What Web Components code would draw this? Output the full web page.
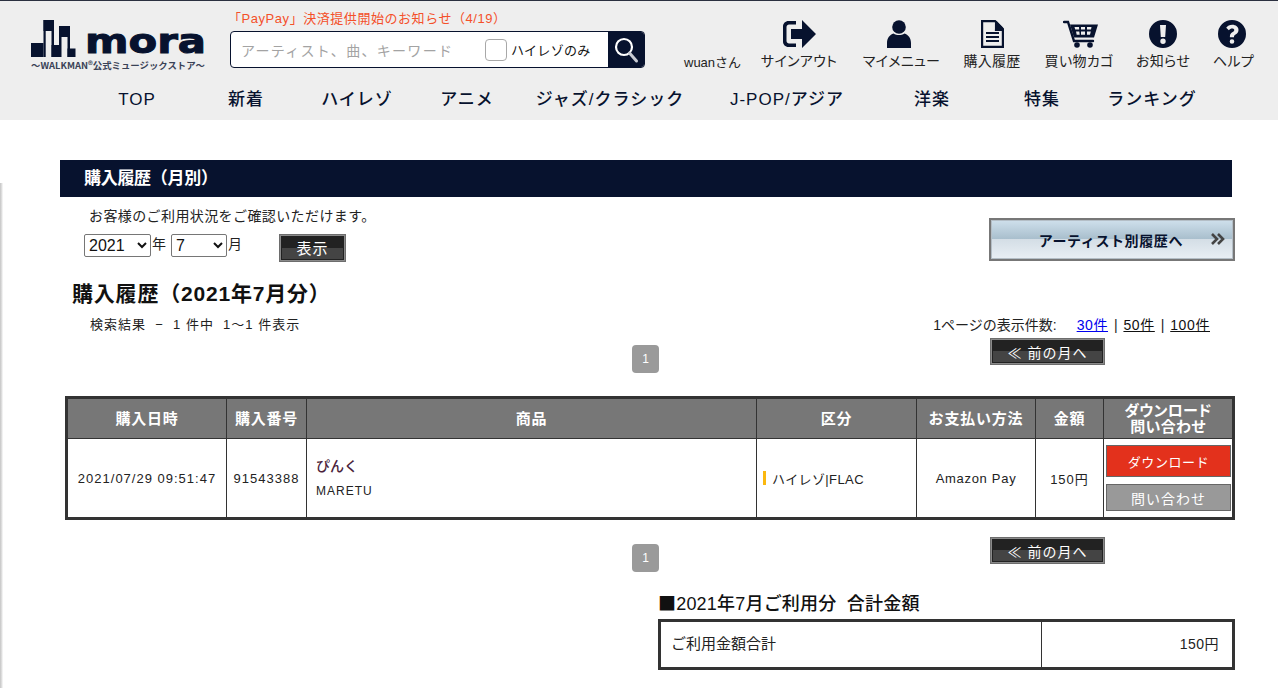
<!DOCTYPE html>
<html lang="ja">
<head>
<meta charset="utf-8">
<title>購入履歴</title>
<style>
  html, body { margin: 0; padding: 0; background: #fff; }
  body {
    font-family: "Liberation Sans", "Noto Sans CJK JP", sans-serif;
    font-size: 13px;
    color: #222;
    overflow: hidden;
    height: 688px;
  }
  .edge {
    position: absolute; left: 0; top: 183px; bottom: 0; width: 3px;
    background: linear-gradient(to right, #c4c4c4, #e6e6e6 70%, #fff);
  }
</style>
</head>
<body>
<div class="edge"></div>

<mora-header>
  <user-link label="サインアウト" style="width:76px">
    <svg width="34" height="28" viewBox="0 0 34 28"><path fill="#07122e" d="M14 1H6.500C3.400 1 1 3.400 1 6.500v15C1 24.600 3.400 27 6.500 27H14v-3.500H7c-1.200 0-2.500-1.200-2.500-2.500V7c0-1.300 1.300-2.500 2.500-2.500h7z"/><path fill="#07122e" d="M9 9h11V0l14 14-14 14v-9H9z"/></svg>
  </user-link>
  <user-link label="マイメニュー" style="width:77px;margin-left:26px" shift="-3">
    <svg width="24" height="28" viewBox="0 0 24 28"><circle cx="12" cy="7" r="6.800" fill="#07122e"/><path fill="#07122e" d="M0 28v-5c0-5 3-8.500 6.500-9.500 3.300 2 7.700 2 11 0 3.500 1 6.500 4.500 6.500 9.500v5z"/></svg>
  </user-link>
  <user-link label="購入履歴" style="width:60px;margin-left:22px">
    <svg width="23" height="28" viewBox="0 0 23 28"><path fill="none" stroke="#07122e" stroke-width="2.200" d="M1.100 1.100h13l7.800 7.800v18h-20.800z"/><path fill="#07122e" d="M14 1.100h1.500l6.400 6.400v3.500h-8z"/><path stroke="#07122e" stroke-width="2" d="M5 13h13M5 17h13M5 21h13"/></svg>
  </user-link>
  <user-link label="買い物カゴ" style="width:66px;margin-left:24px" shift="2">
    <svg width="36" height="28" viewBox="0 0 36 28"><path fill="none" stroke="#07122e" stroke-width="2.400" stroke-linecap="round" d="M1 2h4l6 19h19"/><path fill="#07122e" fill-rule="evenodd" d="M7 4.500h28l-4 13H11zM11.500 7l.7 2.500h4L16 7zM18 7v2.500h4V7zM24 7v2.500h4l.5-2.500zM13 11.500l.7 3.200h3L16.300 11.500zM18 11.500v3.200h4v-3.200zM24 11.500v3.200h3l.8-3.200z"/><circle cx="14" cy="25" r="2.800" fill="#07122e"/><circle cx="27" cy="25" r="2.800" fill="#07122e"/></svg>
  </user-link>
  <user-link label="お知らせ" style="width:56px;margin-left:23px">
    <svg width="28" height="28" viewBox="0 0 28 28"><path fill="#07122e" fill-rule="evenodd" d="M14 0a14 14 0 1 0 0 28 14 14 0 0 0 0-28zM11 5h6l-.8 12h-4.400zM14 18.500a2.700 2.700 0 1 1 0 5.400 2.700 2.700 0 0 1 0-5.400z"/></svg>
  </user-link>
  <user-link label="ヘルプ" style="width:41px;margin-left:22px" shift="-2">
    <svg width="28" height="28" viewBox="0 0 28 28"><path fill="#07122e" fill-rule="evenodd" d="M14 0a14 14 0 1 0 0 28 14 14 0 0 0 0-28zM14.200 4.800c3.700 0 6.300 2.100 6.300 5.200 0 2.400-1.300 3.500-2.900 4.500-1.100.7-1.600 1.200-1.600 2.300v.4h-4.100v-.8c0-2 .8-3.100 2.400-4.100 1.300-.8 2-1.300 2-2.200 0-1-.9-1.600-2.100-1.600-1.300 0-2.400.6-3.300 1.700L8.200 7.700c1.400-1.800 3.400-2.900 6-2.900zM14 19.200a2.300 2.300 0 1 1 0 4.600 2.300 2.300 0 0 1 0-4.600z"/></svg>
  </user-link>
</mora-header>

<mora-main></mora-main>

<template id="header-tpl">
  <style>
    :host {
      display: block; height: 119px; background: #eee;
      border-top: 1px solid #2b3040;
      color: #07122e;
    }
    .top { display: flex; height: 81px; }
    .logo { width: 175px; margin: 19px 0 0 31px; flex: none; }
    .search { width: 415px; margin-left: 24px; flex: none; }
    .notice { color: #f4502a; font-size: 13px; line-height: 18px; margin: 9px 0 0 -2px; letter-spacing: .55px; white-space: nowrap; }
    .box {
      display: flex; align-items: center; height: 35px; margin-top: 3px;
      border: 1px solid #07122e; border-radius: 4px; background: #fff; overflow: hidden;
    }
    .ph { color: #a3a3a3; font-size: 14px; letter-spacing: 1.3px; padding-left: 10px; width: 244px; white-space: nowrap; }
    .cb { width: 20px; height: 20px; border: 1px solid #a8a8a8; border-radius: 4px; background: #fff; flex: none; }
    .hr { font-size: 13px; color: #111; margin-left: 4px; letter-spacing: .3px; white-space: nowrap; }
    .go { margin-left: auto; width: 36px; height: 100%; background: #07122e; display: flex; align-items: center; justify-content: center; }
    .user { font-size: 13px; color: #222; margin: 51px 0 0 39px; width: 77px; flex: none; white-space: nowrap; }
    .links { display: flex; align-items: flex-start; margin-top: 19px; }
    nav { display: grid; grid-template-columns: 110px 108px 114px 106px 180px 174px 116px 104px 116px; margin-left: 82px; }
    nav a {
      text-align: center; font-size: 17px; line-height: 36px; font-weight: 500;
      letter-spacing: 1px; color: #07122e; white-space: nowrap;
    }
  </style>
  <div class="top">
    <svg class="logo" width="175" height="52" viewBox="0 0 175 52">
      <g fill="#07122e">
        <rect x="0" y="23" width="12.500" height="14"/>
        <rect x="12.500" y="0" width="10.500" height="11"/>
        <rect x="12.500" y="0" width="2.200" height="37"/>
        <rect x="20.500" y="0" width="2.500" height="37"/>
        <rect x="20.500" y="25" width="9" height="12"/>
        <rect x="28" y="6" width="11" height="11"/>
        <rect x="28" y="6" width="2.500" height="31"/>
        <rect x="36.500" y="6" width="2.500" height="31"/>
        <rect x="36.500" y="28.500" width="8" height="8.500"/>
      </g>
      <text x="54" y="33" font-family="'DejaVu Sans',sans-serif" font-weight="700" font-size="34" fill="#07122e" stroke="#07122e" stroke-width="1" textLength="121" lengthAdjust="spacingAndGlyphs">mora</text>
      <text x="0" y="49" font-family="'Noto Sans CJK JP',sans-serif" font-weight="700" font-size="9" fill="#3a4256" textLength="174" lengthAdjust="spacingAndGlyphs">〜WALKMAN®公式ミュージックストア〜</text>
    </svg>
    <div class="search">
      <div class="notice">「PayPay」決済提供開始のお知らせ（4/19）</div>
      <div class="box">
        <span class="ph">アーティスト、曲、キーワード</span>
        <span class="cb"></span>
        <span class="hr">ハイレゾのみ</span>
        <span class="go">
          <svg width="26" height="28" viewBox="0 0 26 28"><circle cx="11" cy="11" r="8" fill="none" stroke="#fff" stroke-width="2.200"/><path d="M16.500 17l7 8" stroke="#c9ccd4" stroke-width="3" stroke-linecap="round"/></svg>
        </span>
      </div>
    </div>
    <div class="user">wuanさん</div>
    <div class="links"><slot></slot></div>
  </div>
  <nav>
    <a>TOP</a><a>新着</a><a>ハイレゾ</a><a>アニメ</a><a>ジャズ/クラシック</a><a>J-POP/アジア</a><a>洋楽</a><a>特集</a><a>ランキング</a>
  </nav>
</template>

<template id="user-link-tpl">
  <style>
    :host { display: flex; flex-direction: column; align-items: center; flex: none; color: #222; }
    .ico { height: 28px; display: flex; justify-content: center; }
    .lbl { font-size: 14px; line-height: 18px; margin-top: 4px; white-space: nowrap; font-feature-settings: "palt"; letter-spacing: .3px; }
  </style>
  <div class="ico"><slot></slot></div>
  <div class="lbl"></div>
</template>

<template id="dark-button-tpl">
  <style>
    :host {
      display: inline-flex; align-items: center; justify-content: center; box-sizing: border-box;
      border: 2px solid #8a8a8a; outline: 1px solid #6d6d6d; outline-offset: -1px;
      color: #fff; font-size: 14px; letter-spacing: 1px; white-space: nowrap;
      background: linear-gradient(to bottom, #222 0 50%, #444 50% 100%);
      box-shadow: inset 0 0 0 1px #222;
    }
  </style>
  <slot></slot>
</template>

<template id="pager-chip-tpl">
  <style>
    :host {
      display: flex; align-items: center; justify-content: center;
      width: 27px; height: 28px; border-radius: 4px; background: #9a9a9a;
      color: #fff; font-size: 12px; flex: none;
    }
  </style>
  <slot></slot>
</template>

<template id="page-row-tpl">
  <style>
    :host { display: flex; align-items: flex-start; height: 35px; }
    pager-chip { margin: 7px 0 0 572px; }
    dark-button { width: 115px; height: 27px; margin-left: 331px; }
  </style>
  <pager-chip>1</pager-chip>
  <dark-button>≪ 前の月へ</dark-button>
</template>

<template id="history-table-tpl">
  <style>
    :host { display: block; width: 1170px; margin-left: 5px; }
    table {
      width: 100%; box-sizing: border-box; height: 124px; table-layout: fixed; border-collapse: collapse;
      border: 3px solid #333; letter-spacing: 1px; font-size: 13px; color: #222;
    }
    col.a { width: 160px; } col.b { width: 80px; } col.c { width: 450px; } col.d { width: 160px; } col.e { width: 119px; } col.f { width: 68px; }
    th {
      height: 39px; padding: 0; background: #777; color: #fff; font-size: 15px; font-weight: 700;
      line-height: 16px; border: 1px solid #333; border-top: 0; letter-spacing: .8px; white-space: nowrap;
    }
    th.kana { font-feature-settings: "palt"; letter-spacing: .3px; }
    td { padding: 0; border: 1px solid #333; text-align: center; }
    td.item { text-align: left; padding-left: 9px; }
    .title { font-size: 14px; color: #4c1f3c; font-weight: 500; line-height: 20px; margin-top: -1px; letter-spacing: 0; }
    .artist { font-size: 12px; line-height: 18px; margin-top: 6px; }
    td.kind { text-align: left; padding-left: 6px; }
    .kind-wrap { display: flex; align-items: center; gap: 6px; letter-spacing: .4px; }
    .bar { width: 3px; height: 14px; background: #fbb80f; flex: none; }
    .amazon { letter-spacing: .7px; }
    .btns { display: flex; flex-direction: column; gap: 7px; padding: 0 1px 0 2px; }
    .btn {
      height: 30px; box-sizing: border-box; display: flex; align-items: center; justify-content: center;
      color: #fff; font-size: 14px; border: 1px solid #666; white-space: nowrap;
    }
    .dl { background: #e3311c; height: 32px; font-size: 13px; letter-spacing: .6px; }
    .ask { background: #999; height: 27px; }
  </style>
  <table>
    <colgroup><col class="a"><col class="b"><col class="c"><col class="d"><col class="e"><col class="f"><col></colgroup>
    <tr><th>購入日時</th><th>購入番号</th><th>商品</th><th>区分</th><th>お支払い方法</th><th>金額</th><th class="kana">ダウンロード<br>問い合わせ</th></tr>
    <tr>
      <td>2021/07/29 09:51:47</td>
      <td>91543388</td>
      <td class="item"><div class="title">ぴんく</div><div class="artist">MARETU</div></td>
      <td class="kind"><div class="kind-wrap"><span class="bar"></span><span>ハイレゾ|FLAC</span></div></td>
      <td class="amazon">Amazon Pay</td>
      <td>150円</td>
      <td><div class="btns"><div class="btn dl">ダウンロード</div><div class="btn ask">問い合わせ</div></div></td>
    </tr>
  </table>
</template>

<template id="summary-table-tpl">
  <style>
    :host { display: block; width: 577px; margin-left: 598px; }
    h3 { margin: 20px 0 3px; height: 24px; font-size: 18px; line-height: 24px; font-weight: 500; color: #111; white-space: pre; letter-spacing: .2px; }
    h3 b { font-family: "Noto Sans CJK JP", sans-serif; font-weight: 500; line-height: 1; }
    table {
      width: 100%; height: 51px; box-sizing: border-box; table-layout: fixed; border-collapse: collapse;
      border: 3px solid #333; font-size: 15px;
    }
    td { padding: 0 12px 0 10px; border: 1px solid #333; }
    td:last-child { text-align: right; width: 167px; padding-right: 13px; font-size: 14px; letter-spacing: .5px; }
    td span { position: relative; top: -2px; }
  </style>
  <h3><b>■</b>2021年7月ご利用分  合計金額</h3>
  <table><tr><td><span>ご利用金額合計</span></td><td><span>150円</span></td></tr></table>
</template>

<template id="main-tpl">
  <style>
    :host { display: block; padding: 40px 43px 0 60px; color: #222; font-size: 14px; }
    .banner {
      height: 37px; width: 1172px; box-sizing: border-box; padding-left: 24px; background: #07122e; color: #fff;
      font-size: 17px; font-weight: 700; line-height: 38px; letter-spacing: -.3px;
    }
    .filter { display: flex; justify-content: space-between; align-items: flex-start; height: 65px; }
    .lead { margin: 9px 0 0 29px; line-height: 20px; letter-spacing: .4px; }
    .form { display: flex; align-items: flex-start; margin: 8px 0 0 24px; font-size: 14px; line-height: 21px; letter-spacing: 0; }
    select {
      height: 23px; box-sizing: border-box; font: 16px "Liberation Sans", sans-serif; background: #fff; color: #111;
      border: 1px solid #767676; border-radius: 2px; padding: 0;
    }
    .y { width: 67px; margin-right: 1px; } .m { width: 56px; margin: 0 1px 0 5px; }
    dark-button { width: 67px; height: 28px; margin-left: 37px; font-size: 15px; }
    .artist-btn {
      width: 246px; height: 43px; margin-top: 21px; box-sizing: border-box; border: 2px solid #777;
      box-shadow: inset 0 0 0 1px #b4bec6;
      background: linear-gradient(to bottom, #cfe0ec 0, #a9bfcd 48%, #d4dee6 50%, #e9eff4 100%);
      display: flex; align-items: center; justify-content: flex-end; position: relative;
      font-size: 14px; font-weight: 700; letter-spacing: .6px; color: #07122e; padding-right: 50px; white-space: nowrap;
    }
    .artist-btn i { position: absolute; right: 7px; top: 11px; display: flex; }
    h2 { margin: 17px 0 0 12px; font-size: 21px; line-height: 30px; font-weight: 700; color: #111; letter-spacing: .8px; }
    .results { display: flex; justify-content: space-between; height: 24px; margin-top: 5px; padding-top: 1px; box-sizing: border-box; line-height: 20px; font-size: 13px; letter-spacing: 1px; }
    .results .l { margin-left: 30px; white-space: pre; }
    .results .r { margin-right: 25px; font-size: 14px; letter-spacing: 0; white-space: nowrap; }
    .results .r a { letter-spacing: .6px; margin: 0 2px; }
    .results .r a:first-of-type { margin-left: 20px; }
    .results .r a:last-of-type { margin-right: 0; }
    a { color: #111; text-decoration: underline; } a.on { color: #00e; }
    .second { margin-top: 17px; }
    history-table { margin-top: 23px; }
  </style>
  <div class="banner">購入履歴（月別）</div>
  <div class="filter">
    <div>
      <div class="lead">お客様のご利用状況をご確認いただけます。</div>
      <div class="form">
        <select class="y"><option>2021</option></select><span>年</span>
        <select class="m"><option>7</option></select><span>月</span>
        <dark-button>表示</dark-button>
      </div>
    </div>
    <div class="artist-btn">アーティスト別履歴へ
      <i><svg width="16" height="16" viewBox="0 0 16 16"><path d="M2 3l5 5-5 5M8 3l5 5-5 5" fill="none" stroke="#444" stroke-width="2.600"/></svg></i>
    </div>
  </div>
  <h2>購入履歴（2021年7月分）</h2>
  <div class="results">
    <span class="l">検索結果  −  1 件中  1〜1 件表示</span>
    <span class="r">1ページの表示件数:<a class="on">30件</a> | <a>50件</a> | <a>100件</a></span>
  </div>
  <page-row></page-row>
  <history-table></history-table>
  <page-row class="second"></page-row>
  <summary-table></summary-table>
</template>

<script>
  function define(name, tplId, setup) {
    customElements.define(name, class extends HTMLElement {
      constructor() {
        super();
        this.attachShadow({ mode: 'open' });
        this.shadowRoot.appendChild(document.getElementById(tplId).content.cloneNode(true));
      }
      connectedCallback() {
        if (setup) setup(this);
      }
    });
  }

  define('dark-button', 'dark-button-tpl');
  define('pager-chip', 'pager-chip-tpl');
  define('page-row', 'page-row-tpl');
  define('history-table', 'history-table-tpl');
  define('summary-table', 'summary-table-tpl');
  define('mora-header', 'header-tpl');
  define('mora-main', 'main-tpl');
  define('user-link', 'user-link-tpl', el => {
    el.shadowRoot.querySelector('.lbl').textContent = el.getAttribute('label');
    // some icons sit a little off the centre of their label
    const shift = el.getAttribute('shift');
    if (shift) el.shadowRoot.querySelector('.ico').style.transform = `translateX(${shift}px)`;
  });
</script>
</body>
</html>
